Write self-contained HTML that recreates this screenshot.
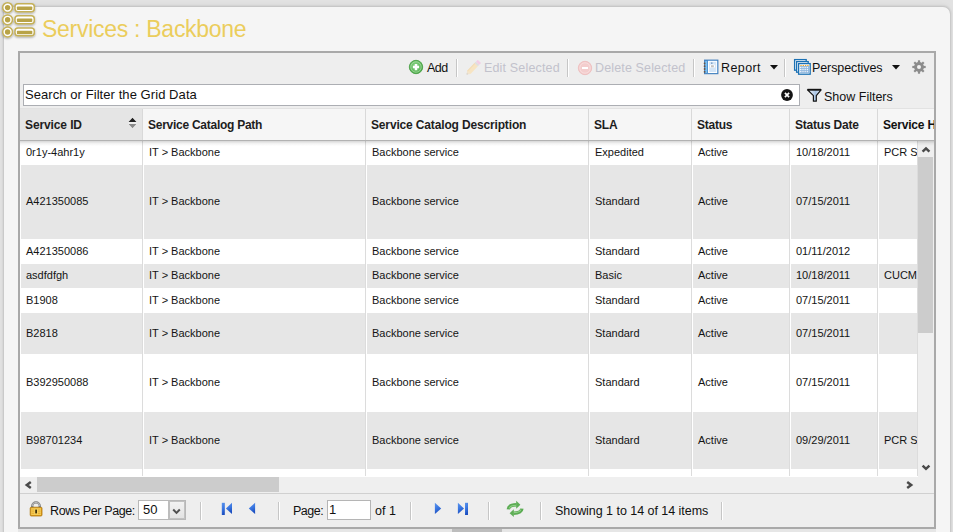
<!DOCTYPE html>
<html><head><meta charset="utf-8">
<style>
*{box-sizing:border-box;margin:0;padding:0}
html,body{width:953px;height:532px;overflow:hidden;background:#e2e2e2;font-family:"Liberation Sans",sans-serif;position:relative}
.abs{position:absolute}
.tx{position:absolute;white-space:nowrap}
.clip{position:absolute;overflow:hidden}
#panel{position:absolute;left:4px;top:7px;width:946px;height:540px;background:#f5f5f5;border-radius:7px 7px 0 0;box-shadow:0 0 2px 1px rgba(0,0,0,0.12),0 -2px 5px rgba(0,0,0,0.05)}
#grid{position:absolute;left:18px;top:51px;width:918px;height:478px;border:2px solid #a9a9a9;background:#eeeeee}
.sep{position:absolute;top:59px;width:1px;height:18px;background:#c6c6c6;box-shadow:1px 0 0 #ffffff}
#search{position:absolute;left:23px;top:84px;width:777px;height:22px;border:1px solid #acaeb3;background:#fff}
#hdrbg{position:absolute;left:20px;top:108px;width:914px;height:33px;border-top:1px solid #e2e2e2;border-bottom:1px solid #b2b2b2}
#hshadow{position:absolute;left:20px;top:141px;width:914px;height:5px;background:linear-gradient(rgba(0,0,0,0.16),rgba(0,0,0,0.05) 50%,rgba(0,0,0,0))}
.h{position:absolute;top:109px;height:31px}
.hl{position:absolute;top:109px;width:1px;height:31px;background:#d9d9d9;box-shadow:1px 0 0 #fafafa}
#bodybg{position:absolute;left:20px;top:141px;width:898px;height:336px;background:#fff}
.cb{position:absolute}
.vl{position:absolute;width:1px;background:#dcdcdc}
.ct{position:absolute;font-size:11px;line-height:14px;color:#141414;white-space:nowrap}
#vs{position:absolute;left:918px;top:141px;width:16px;height:336px;background:#efefef}
#hs{position:absolute;left:20px;top:477px;width:914px;height:17px;background:#efefef;border-bottom:1px solid #d0d0d0}
#pager{position:absolute;left:20px;top:494px;width:914px;height:33px;background:#eeeeee}
.psep{position:absolute;top:502px;width:1px;height:18px;background:#c6c6c6;box-shadow:1px 0 0 #ffffff}
</style></head><body>
<div id="panel"></div>
<svg class="abs" style="left:0;top:0" width="42" height="42" viewBox="0 0 42 42">
 <defs><filter id="ish" x="-10%" y="-10%" width="130%" height="130%"><feGaussianBlur in="SourceAlpha" stdDeviation="0.9"/><feOffset dx="0.4" dy="0.6"/><feComponentTransfer><feFuncA type="linear" slope="0.35"/></feComponentTransfer><feMerge><feMergeNode/><feMergeNode in="SourceGraphic"/></feMerge></filter></defs>
 <g filter="url(#ish)">
  <circle cx="7.6" cy="7.6" r="4.9" fill="#fff" stroke="#c4b059" stroke-width="1.5"/>
  <circle cx="7.6" cy="7.6" r="2.7" fill="#b8a347"/>
  <rect x="15" y="3.75" width="19.3" height="7.9" rx="3" fill="#fff" stroke="#c4b059" stroke-width="1.5"/>
  <rect x="16.9" y="6.5" width="15.4" height="3.5" rx="0.8" fill="#b8a347"/>
  <circle cx="7.6" cy="19.8" r="4.9" fill="#fff" stroke="#c4b059" stroke-width="1.5"/>
  <circle cx="7.6" cy="19.8" r="2.7" fill="#b8a347"/>
  <rect x="15" y="15.85" width="19.3" height="7.9" rx="3" fill="#fff" stroke="#c4b059" stroke-width="1.5"/>
  <rect x="16.9" y="18.6" width="15.4" height="3.5" rx="0.8" fill="#b8a347"/>
  <circle cx="7.6" cy="32.0" r="4.9" fill="#fff" stroke="#c4b059" stroke-width="1.5"/>
  <circle cx="7.6" cy="32.0" r="2.7" fill="#b8a347"/>
  <rect x="15" y="27.95" width="19.3" height="7.9" rx="3" fill="#fff" stroke="#c4b059" stroke-width="1.5"/>
  <rect x="16.9" y="30.7" width="15.4" height="3.5" rx="0.8" fill="#b8a347"/>
 </g>
</svg>
<div id="grid"></div>
<!-- toolbar -->
<svg class="abs" style="left:408px;top:59px" width="16" height="16" viewBox="0 0 16 16"><defs><radialGradient id="gg" cx="0.45" cy="0.4" r="0.6"><stop offset="0" stop-color="#8ad486"/><stop offset="1" stop-color="#4fae4b"/></radialGradient></defs><circle cx="8" cy="8" r="6.7" fill="url(#gg)" stroke="#4a9f45" stroke-width="0.9"/><circle cx="8" cy="8" r="5.2" fill="none" stroke="#d8f0d6" stroke-opacity="0.55" stroke-width="0.8"/><path d="M8 5v6.2M4.9 8.1h6.2" stroke="#fff" stroke-width="2.5"/></svg>
<div class="sep" style="left:456px"></div>
<svg class="abs" style="left:462px;top:56px" width="24" height="24" viewBox="0 0 24 24"><g transform="translate(4.6 18.6) rotate(-46)"><path d="M0 0L3.2 -2.3V2.3z" fill="#f1e3cc"/><path d="M0 0L1.3 -0.9V0.9z" fill="#c8c8c8"/><rect x="3.2" y="-2.3" width="10.6" height="4.6" fill="#f7e4c2"/><rect x="3.2" y="-2.3" width="10.6" height="1" fill="#f2dcb8"/><rect x="13.8" y="-2.3" width="2" height="4.6" fill="#dedede"/><rect x="15.8" y="-2.3" width="2.6" height="4.6" rx="0.6" fill="#f3cde6"/></g></svg>
<div class="sep" style="left:567px"></div>
<svg class="abs" style="left:577px;top:60px" width="16" height="16" viewBox="0 0 16 16"><circle cx="8" cy="8" r="6.7" fill="#f3cdcd" stroke="#edbdbd" stroke-width="0.9"/><circle cx="8" cy="8" r="5.2" fill="none" stroke="#fbe6e6" stroke-opacity="0.7" stroke-width="0.8"/><path d="M5 8h6" stroke="#fff" stroke-width="2"/></svg>
<div class="sep" style="left:693px"></div>
<svg class="abs" style="left:703px;top:59px" width="16" height="16" viewBox="0 0 16 16"><rect x="1.5" y="1" width="13.5" height="13.8" fill="#4d8fcf" stroke="#3a78b8" stroke-width="0.8"/><rect x="2.3" y="2" width="1.8" height="12" fill="#7cc0f0"/><rect x="5" y="1.8" width="9.2" height="12.2" fill="#ffffff"/><rect x="6.2" y="2.8" width="7" height="10.2" fill="#d3e5f7"/><rect x="7" y="5.6" width="5" height="3.2" rx="1" fill="#fff"/><path d="M8 6.8h2.8M8 7.8h2.8" stroke="#8a8a8a" stroke-width="0.6"/><rect x="8.2" y="3.6" width="1.2" height="1" fill="#2c5f9a"/><g fill="#6a5040"><circle cx="1.6" cy="4.3" r="0.9"/><circle cx="1.6" cy="7.2" r="0.9"/><circle cx="1.6" cy="10" r="0.9"/><circle cx="1.6" cy="12.8" r="0.9"/></g></svg>
<svg class="abs" style="left:770px;top:65px" width="8" height="5" viewBox="0 0 8 5"><path d="M0 0h8L4 4.6z" fill="#111"/></svg>
<div class="sep" style="left:784px"></div>
<svg class="abs" style="left:793px;top:58px" width="19" height="18" viewBox="0 0 19 18"><rect x="1.6" y="1.6" width="11.6" height="10.6" fill="#fff" stroke="#1c71b4" stroke-width="1.3"/><rect x="3.6" y="3.6" width="11.6" height="10.6" fill="#fff" stroke="#1c71b4" stroke-width="1.3"/><rect x="5.6" y="5.6" width="11.6" height="10.6" fill="#fff" stroke="#1c71b4" stroke-width="1.3"/><g fill="#f2a72a"><rect x="7.3" y="7" width="1.4" height="1.1"/><rect x="9.6" y="7" width="1.4" height="1.1"/><rect x="11.9" y="7" width="1.4" height="1.1"/><rect x="14.2" y="7" width="1.4" height="1.1"/></g><path d="M6.8 8.6h9.6M6.8 10.6h9.6M6.8 12.6h9.6M6.8 14.4h9.6M8.9 8.2v7M11.1 8.2v7M13.3 8.2v7M15.5 8.2v7" stroke="#8db6de" stroke-width="0.9"/></svg>
<svg class="abs" style="left:892px;top:65px" width="8" height="5" viewBox="0 0 8 5"><path d="M0 0h8L4 4.6z" fill="#111"/></svg>
<svg class="abs" style="left:912px;top:59.5px" width="14" height="14" viewBox="0 0 14 14"><g fill="#8c8c8c"><circle cx="7" cy="7" r="4.9"/><rect x="5.9" y="0.3" width="2.2" height="13.4"/><rect x="0.3" y="5.9" width="13.4" height="2.2"/><rect x="5.9" y="0.3" width="2.2" height="13.4" transform="rotate(45 7 7)"/><rect x="5.9" y="0.3" width="2.2" height="13.4" transform="rotate(-45 7 7)"/></g><circle cx="7" cy="7" r="2" fill="#f2f2f2"/></svg>
<!-- search -->
<div id="search"></div>
<svg class="abs" style="left:781px;top:89px" width="12" height="12" viewBox="0 0 12 12"><circle cx="6" cy="6" r="5.9" fill="#151515"/><path d="M3.9 3.9l4.2 4.2M8.1 3.9l-4.2 4.2" stroke="#fff" stroke-width="1.7"/></svg>
<svg class="abs" style="left:806px;top:88px" width="17" height="15" viewBox="0 0 17 15"><defs><linearGradient id="fg" x1="0" y1="0" x2="1" y2="0"><stop offset="0" stop-color="#ffffff"/><stop offset="0.6" stop-color="#a9c4e4"/><stop offset="1" stop-color="#e8f0fa"/></linearGradient></defs><path d="M1.5 1.8h13.6L10.3 7.6v5.6H7.4V7.6z" fill="url(#fg)" stroke="#141414" stroke-width="1.2" stroke-linejoin="round"/><path d="M1.5 1.6h13.6" stroke="#141414" stroke-width="1.6"/></svg>
<!-- header -->
<div id="hdrbg"></div>
<div class="h" style="left:20px;width:122px;background:#e5e5e5"></div>
<div class="hl" style="left:142px"></div>
<div class="h" style="left:143px;width:222px;background:#f6f6f6"></div>
<div class="hl" style="left:365px"></div>
<div class="h" style="left:366px;width:222px;background:#f6f6f6"></div>
<div class="hl" style="left:588px"></div>
<div class="h" style="left:589px;width:102px;background:#f6f6f6"></div>
<div class="hl" style="left:691px"></div>
<div class="h" style="left:692px;width:97px;background:#f6f6f6"></div>
<div class="hl" style="left:789px"></div>
<div class="h" style="left:790px;width:87px;background:#f6f6f6"></div>
<div class="hl" style="left:877px"></div>
<div class="h" style="left:878px;width:56px;background:#f6f6f6"></div>
<svg class="abs" style="left:126px;top:116px" width="13" height="14" viewBox="0 0 13 14"><path d="M2.5 6L6.5 1.8 10.5 6z" fill="#222" stroke="#fff" stroke-width="0.8" paint-order="stroke"/><path d="M2.5 8L6.5 12.2 10.5 8z" fill="#8a8a8a" stroke="#fff" stroke-width="0.8" paint-order="stroke"/></svg>
<!-- body -->
<div id="bodybg"></div>
<div class="cb" style="left:21px;top:141px;width:121px;height:24px;background:#fff"></div>
<div class="clip" style="left:20px;top:141px;width:122px;height:24px"><span class="ct" style="left:6px;top:4px">0r1y-4ahr1y</span></div>
<div class="cb" style="left:144px;top:141px;width:221px;height:24px;background:#fff"></div>
<div class="clip" style="left:143px;top:141px;width:222px;height:24px"><span class="ct" style="left:6px;top:4px">IT &gt; Backbone</span></div>
<div class="cb" style="left:367px;top:141px;width:221px;height:24px;background:#fff"></div>
<div class="clip" style="left:366px;top:141px;width:222px;height:24px"><span class="ct" style="left:6px;top:4px">Backbone service</span></div>
<div class="cb" style="left:590px;top:141px;width:101px;height:24px;background:#fff"></div>
<div class="clip" style="left:589px;top:141px;width:102px;height:24px"><span class="ct" style="left:6px;top:4px">Expedited</span></div>
<div class="cb" style="left:693px;top:141px;width:96px;height:24px;background:#fff"></div>
<div class="clip" style="left:692px;top:141px;width:97px;height:24px"><span class="ct" style="left:6px;top:4px">Active</span></div>
<div class="cb" style="left:791px;top:141px;width:86px;height:24px;background:#fff"></div>
<div class="clip" style="left:790px;top:141px;width:87px;height:24px"><span class="ct" style="left:6px;top:4px">10/18/2011</span></div>
<div class="cb" style="left:879px;top:141px;width:38px;height:24px;background:#fff"></div>
<div class="clip" style="left:878px;top:141px;width:39px;height:24px"><span class="ct" style="left:6px;top:4px">PCR Switch</span></div>
<div class="cb" style="left:21px;top:165px;width:121px;height:74px;background:#e6e6e6"></div>
<div class="clip" style="left:20px;top:165px;width:122px;height:74px"><span class="ct" style="left:6px;top:29px">A421350085</span></div>
<div class="cb" style="left:144px;top:165px;width:221px;height:74px;background:#e6e6e6"></div>
<div class="clip" style="left:143px;top:165px;width:222px;height:74px"><span class="ct" style="left:6px;top:29px">IT &gt; Backbone</span></div>
<div class="cb" style="left:367px;top:165px;width:221px;height:74px;background:#e6e6e6"></div>
<div class="clip" style="left:366px;top:165px;width:222px;height:74px"><span class="ct" style="left:6px;top:29px">Backbone service</span></div>
<div class="cb" style="left:590px;top:165px;width:101px;height:74px;background:#e6e6e6"></div>
<div class="clip" style="left:589px;top:165px;width:102px;height:74px"><span class="ct" style="left:6px;top:29px">Standard</span></div>
<div class="cb" style="left:693px;top:165px;width:96px;height:74px;background:#e6e6e6"></div>
<div class="clip" style="left:692px;top:165px;width:97px;height:74px"><span class="ct" style="left:6px;top:29px">Active</span></div>
<div class="cb" style="left:791px;top:165px;width:86px;height:74px;background:#e6e6e6"></div>
<div class="clip" style="left:790px;top:165px;width:87px;height:74px"><span class="ct" style="left:6px;top:29px">07/15/2011</span></div>
<div class="cb" style="left:879px;top:165px;width:38px;height:74px;background:#e6e6e6"></div>
<div class="cb" style="left:21px;top:239px;width:121px;height:25px;background:#fff"></div>
<div class="clip" style="left:20px;top:239px;width:122px;height:25px"><span class="ct" style="left:6px;top:5px">A421350086</span></div>
<div class="cb" style="left:144px;top:239px;width:221px;height:25px;background:#fff"></div>
<div class="clip" style="left:143px;top:239px;width:222px;height:25px"><span class="ct" style="left:6px;top:5px">IT &gt; Backbone</span></div>
<div class="cb" style="left:367px;top:239px;width:221px;height:25px;background:#fff"></div>
<div class="clip" style="left:366px;top:239px;width:222px;height:25px"><span class="ct" style="left:6px;top:5px">Backbone service</span></div>
<div class="cb" style="left:590px;top:239px;width:101px;height:25px;background:#fff"></div>
<div class="clip" style="left:589px;top:239px;width:102px;height:25px"><span class="ct" style="left:6px;top:5px">Standard</span></div>
<div class="cb" style="left:693px;top:239px;width:96px;height:25px;background:#fff"></div>
<div class="clip" style="left:692px;top:239px;width:97px;height:25px"><span class="ct" style="left:6px;top:5px">Active</span></div>
<div class="cb" style="left:791px;top:239px;width:86px;height:25px;background:#fff"></div>
<div class="clip" style="left:790px;top:239px;width:87px;height:25px"><span class="ct" style="left:6px;top:5px">01/11/2012</span></div>
<div class="cb" style="left:879px;top:239px;width:38px;height:25px;background:#fff"></div>
<div class="cb" style="left:21px;top:264px;width:121px;height:24px;background:#e6e6e6"></div>
<div class="clip" style="left:20px;top:264px;width:122px;height:24px"><span class="ct" style="left:6px;top:4px">asdfdfgh</span></div>
<div class="cb" style="left:144px;top:264px;width:221px;height:24px;background:#e6e6e6"></div>
<div class="clip" style="left:143px;top:264px;width:222px;height:24px"><span class="ct" style="left:6px;top:4px">IT &gt; Backbone</span></div>
<div class="cb" style="left:367px;top:264px;width:221px;height:24px;background:#e6e6e6"></div>
<div class="clip" style="left:366px;top:264px;width:222px;height:24px"><span class="ct" style="left:6px;top:4px">Backbone service</span></div>
<div class="cb" style="left:590px;top:264px;width:101px;height:24px;background:#e6e6e6"></div>
<div class="clip" style="left:589px;top:264px;width:102px;height:24px"><span class="ct" style="left:6px;top:4px">Basic</span></div>
<div class="cb" style="left:693px;top:264px;width:96px;height:24px;background:#e6e6e6"></div>
<div class="clip" style="left:692px;top:264px;width:97px;height:24px"><span class="ct" style="left:6px;top:4px">Active</span></div>
<div class="cb" style="left:791px;top:264px;width:86px;height:24px;background:#e6e6e6"></div>
<div class="clip" style="left:790px;top:264px;width:87px;height:24px"><span class="ct" style="left:6px;top:4px">10/18/2011</span></div>
<div class="cb" style="left:879px;top:264px;width:38px;height:24px;background:#e6e6e6"></div>
<div class="clip" style="left:878px;top:264px;width:39px;height:24px"><span class="ct" style="left:6px;top:4px">CUCM Switch</span></div>
<div class="cb" style="left:21px;top:288px;width:121px;height:25px;background:#fff"></div>
<div class="clip" style="left:20px;top:288px;width:122px;height:25px"><span class="ct" style="left:6px;top:5px">B1908</span></div>
<div class="cb" style="left:144px;top:288px;width:221px;height:25px;background:#fff"></div>
<div class="clip" style="left:143px;top:288px;width:222px;height:25px"><span class="ct" style="left:6px;top:5px">IT &gt; Backbone</span></div>
<div class="cb" style="left:367px;top:288px;width:221px;height:25px;background:#fff"></div>
<div class="clip" style="left:366px;top:288px;width:222px;height:25px"><span class="ct" style="left:6px;top:5px">Backbone service</span></div>
<div class="cb" style="left:590px;top:288px;width:101px;height:25px;background:#fff"></div>
<div class="clip" style="left:589px;top:288px;width:102px;height:25px"><span class="ct" style="left:6px;top:5px">Standard</span></div>
<div class="cb" style="left:693px;top:288px;width:96px;height:25px;background:#fff"></div>
<div class="clip" style="left:692px;top:288px;width:97px;height:25px"><span class="ct" style="left:6px;top:5px">Active</span></div>
<div class="cb" style="left:791px;top:288px;width:86px;height:25px;background:#fff"></div>
<div class="clip" style="left:790px;top:288px;width:87px;height:25px"><span class="ct" style="left:6px;top:5px">07/15/2011</span></div>
<div class="cb" style="left:879px;top:288px;width:38px;height:25px;background:#fff"></div>
<div class="cb" style="left:21px;top:313px;width:121px;height:41px;background:#e6e6e6"></div>
<div class="clip" style="left:20px;top:313px;width:122px;height:41px"><span class="ct" style="left:6px;top:13px">B2818</span></div>
<div class="cb" style="left:144px;top:313px;width:221px;height:41px;background:#e6e6e6"></div>
<div class="clip" style="left:143px;top:313px;width:222px;height:41px"><span class="ct" style="left:6px;top:13px">IT &gt; Backbone</span></div>
<div class="cb" style="left:367px;top:313px;width:221px;height:41px;background:#e6e6e6"></div>
<div class="clip" style="left:366px;top:313px;width:222px;height:41px"><span class="ct" style="left:6px;top:13px">Backbone service</span></div>
<div class="cb" style="left:590px;top:313px;width:101px;height:41px;background:#e6e6e6"></div>
<div class="clip" style="left:589px;top:313px;width:102px;height:41px"><span class="ct" style="left:6px;top:13px">Standard</span></div>
<div class="cb" style="left:693px;top:313px;width:96px;height:41px;background:#e6e6e6"></div>
<div class="clip" style="left:692px;top:313px;width:97px;height:41px"><span class="ct" style="left:6px;top:13px">Active</span></div>
<div class="cb" style="left:791px;top:313px;width:86px;height:41px;background:#e6e6e6"></div>
<div class="clip" style="left:790px;top:313px;width:87px;height:41px"><span class="ct" style="left:6px;top:13px">07/15/2011</span></div>
<div class="cb" style="left:879px;top:313px;width:38px;height:41px;background:#e6e6e6"></div>
<div class="cb" style="left:21px;top:354px;width:121px;height:58px;background:#fff"></div>
<div class="clip" style="left:20px;top:354px;width:122px;height:58px"><span class="ct" style="left:6px;top:21px">B392950088</span></div>
<div class="cb" style="left:144px;top:354px;width:221px;height:58px;background:#fff"></div>
<div class="clip" style="left:143px;top:354px;width:222px;height:58px"><span class="ct" style="left:6px;top:21px">IT &gt; Backbone</span></div>
<div class="cb" style="left:367px;top:354px;width:221px;height:58px;background:#fff"></div>
<div class="clip" style="left:366px;top:354px;width:222px;height:58px"><span class="ct" style="left:6px;top:21px">Backbone service</span></div>
<div class="cb" style="left:590px;top:354px;width:101px;height:58px;background:#fff"></div>
<div class="clip" style="left:589px;top:354px;width:102px;height:58px"><span class="ct" style="left:6px;top:21px">Standard</span></div>
<div class="cb" style="left:693px;top:354px;width:96px;height:58px;background:#fff"></div>
<div class="clip" style="left:692px;top:354px;width:97px;height:58px"><span class="ct" style="left:6px;top:21px">Active</span></div>
<div class="cb" style="left:791px;top:354px;width:86px;height:58px;background:#fff"></div>
<div class="clip" style="left:790px;top:354px;width:87px;height:58px"><span class="ct" style="left:6px;top:21px">07/15/2011</span></div>
<div class="cb" style="left:879px;top:354px;width:38px;height:58px;background:#fff"></div>
<div class="cb" style="left:21px;top:412px;width:121px;height:57px;background:#e6e6e6"></div>
<div class="clip" style="left:20px;top:412px;width:122px;height:57px"><span class="ct" style="left:6px;top:21px">B98701234</span></div>
<div class="cb" style="left:144px;top:412px;width:221px;height:57px;background:#e6e6e6"></div>
<div class="clip" style="left:143px;top:412px;width:222px;height:57px"><span class="ct" style="left:6px;top:21px">IT &gt; Backbone</span></div>
<div class="cb" style="left:367px;top:412px;width:221px;height:57px;background:#e6e6e6"></div>
<div class="clip" style="left:366px;top:412px;width:222px;height:57px"><span class="ct" style="left:6px;top:21px">Backbone service</span></div>
<div class="cb" style="left:590px;top:412px;width:101px;height:57px;background:#e6e6e6"></div>
<div class="clip" style="left:589px;top:412px;width:102px;height:57px"><span class="ct" style="left:6px;top:21px">Standard</span></div>
<div class="cb" style="left:693px;top:412px;width:96px;height:57px;background:#e6e6e6"></div>
<div class="clip" style="left:692px;top:412px;width:97px;height:57px"><span class="ct" style="left:6px;top:21px">Active</span></div>
<div class="cb" style="left:791px;top:412px;width:86px;height:57px;background:#e6e6e6"></div>
<div class="clip" style="left:790px;top:412px;width:87px;height:57px"><span class="ct" style="left:6px;top:21px">09/29/2011</span></div>
<div class="cb" style="left:879px;top:412px;width:38px;height:57px;background:#e6e6e6"></div>
<div class="clip" style="left:878px;top:412px;width:39px;height:57px"><span class="ct" style="left:6px;top:21px">PCR Switch</span></div>
<div class="cb" style="left:21px;top:469px;width:121px;height:8px;background:#fff"></div>
<div class="cb" style="left:144px;top:469px;width:221px;height:8px;background:#fff"></div>
<div class="cb" style="left:367px;top:469px;width:221px;height:8px;background:#fff"></div>
<div class="cb" style="left:590px;top:469px;width:101px;height:8px;background:#fff"></div>
<div class="cb" style="left:693px;top:469px;width:96px;height:8px;background:#fff"></div>
<div class="cb" style="left:791px;top:469px;width:86px;height:8px;background:#fff"></div>
<div class="cb" style="left:879px;top:469px;width:38px;height:8px;background:#fff"></div>
<div class="vl" style="left:142px;top:141px;height:335px"></div>
<div class="vl" style="left:365px;top:141px;height:335px"></div>
<div class="vl" style="left:588px;top:141px;height:335px"></div>
<div class="vl" style="left:691px;top:141px;height:335px"></div>
<div class="vl" style="left:789px;top:141px;height:335px"></div>
<div class="vl" style="left:877px;top:141px;height:335px"></div>
<div class="vl" style="left:917px;top:141px;height:335px"></div>
<div id="vs">
  <svg class="abs" style="left:3px;top:4px" width="10" height="9" viewBox="0 0 10 9"><path d="M1.6 6.6L5 3.4 8.4 6.6" fill="none" stroke="#4a4a4a" stroke-width="2.5"/></svg>
  <div class="abs" style="left:0;top:16px;width:15px;height:176px;background:#cccccc"></div>
  <svg class="abs" style="left:3px;top:322px" width="10" height="9" viewBox="0 0 10 9"><path d="M1.6 2.6L5 5.8 8.4 2.6" fill="none" stroke="#4a4a4a" stroke-width="2.5"/></svg>
</div>
<div id="hs">
  <svg class="abs" style="left:4px;top:3px" width="9" height="10" viewBox="0 0 9 10"><path d="M6.8 1.9L2.8 4.9 6.8 7.9" fill="none" stroke="#4a4a4a" stroke-width="2.5"/></svg>
  <div class="abs" style="left:17px;top:0;width:242px;height:15px;background:#cccccc"></div>
  <svg class="abs" style="left:885px;top:3px" width="9" height="10" viewBox="0 0 9 10"><path d="M2.2 1.9L6.2 4.9 2.2 7.9" fill="none" stroke="#4a4a4a" stroke-width="2.5"/></svg>
</div>
<div id="hshadow"></div>
<!-- pager -->
<div id="pager"></div>
<svg class="abs" style="left:29px;top:500px" width="14" height="17" viewBox="0 0 14 17"><path d="M3.2 7.5V6.2a3.8 3.8 0 0 1 7.6 0V7.5" fill="none" stroke="#7d7d7d" stroke-width="2.2"/><path d="M3.2 7.5V6.2a3.8 3.8 0 0 1 7.6 0V7.5" fill="none" stroke="#d8d8d8" stroke-width="0.7"/><path d="M2.1 6.8h2.2M9.7 6.8h2.2" stroke="#5a78a8" stroke-width="1"/><rect x="1.2" y="7.2" width="11.8" height="8.8" rx="1" fill="#dd9a18" stroke="#b07812" stroke-width="0.8"/><rect x="2.2" y="8.2" width="9.8" height="6.8" fill="#f6cf5a"/><path d="M2.6 10h2.6M2.6 11.8h2.6M2.6 13.6h2.6M9 10h2.6M9 11.8h2.6M9 13.6h2.6" stroke="#e2a52a" stroke-width="0.8"/><rect x="6.3" y="9.6" width="1.6" height="3.8" fill="#2c1e00"/></svg>
<div class="abs" style="left:138px;top:500px;width:48px;height:20px;border:1px solid #b8b8b8;background:#fff"><div class="abs" style="left:29px;top:0;width:17px;height:18px;background:linear-gradient(#f2f2f2,#e3e3e3);border:1px solid #c2c2c2;border-left:2px solid #bdbdbd"></div></div><svg class="abs" style="left:172px;top:507.5px" width="9" height="8" viewBox="0 0 9 8"><path d="M1.2 1.5l3.3 3.4 3.3-3.4" fill="none" stroke="#505050" stroke-width="2"/></svg>
<div class="psep" style="left:200px"></div>
<svg class="abs" style="left:221px;top:502px" width="12" height="14" viewBox="0 0 12 14"><defs><linearGradient id="nb1" x1="0" y1="0" x2="0.3" y2="1"><stop offset="0" stop-color="#5b95ee"/><stop offset="0.55" stop-color="#3a76e0"/><stop offset="1" stop-color="#1c4fc0"/></linearGradient></defs><rect x="0.8" y="0.8" width="3" height="12.2" fill="url(#nb1)"/><path d="M11 0.8V11.9L4.9 6.4z" fill="url(#nb1)"/></svg>
<svg class="abs" style="left:248px;top:502px" width="8" height="14" viewBox="0 0 8 14"><defs><linearGradient id="nb2" x1="0" y1="0" x2="0.3" y2="1"><stop offset="0" stop-color="#5b95ee"/><stop offset="0.55" stop-color="#3a76e0"/><stop offset="1" stop-color="#1c4fc0"/></linearGradient></defs><path d="M7.1 0.8V11.9L0.8 6.4z" fill="url(#nb2)"/></svg>
<div class="psep" style="left:278px"></div>
<div class="abs" style="left:327px;top:500px;width:44px;height:20px;border:1px solid #b5b5b5;background:#fff"></div>
<div class="psep" style="left:410px"></div>
<svg class="abs" style="left:434px;top:502px" width="8" height="14" viewBox="0 0 8 14"><defs><linearGradient id="nb3" x1="0" y1="0" x2="0.3" y2="1"><stop offset="0" stop-color="#5b95ee"/><stop offset="0.55" stop-color="#3a76e0"/><stop offset="1" stop-color="#1c4fc0"/></linearGradient></defs><path d="M0.9 0.8V11.9L7.2 6.4z" fill="url(#nb3)"/></svg>
<svg class="abs" style="left:457px;top:502px" width="12" height="14" viewBox="0 0 12 14"><defs><linearGradient id="nb4" x1="0" y1="0" x2="0.3" y2="1"><stop offset="0" stop-color="#5b95ee"/><stop offset="0.55" stop-color="#3a76e0"/><stop offset="1" stop-color="#1c4fc0"/></linearGradient></defs><path d="M0.9 0.8V11.9L7 6.4z" fill="url(#nb4)"/><rect x="8" y="0.8" width="3" height="12.2" fill="url(#nb4)"/></svg>
<div class="psep" style="left:488px"></div>
<svg class="abs" style="left:503px;top:498px" width="24" height="22" viewBox="0 0 24 22"><g fill="none" stroke-linecap="butt"><path d="M5.3 11.3C5.6 8.2 8.6 6.7 13.6 6.7" stroke="#5aab52" stroke-width="3.4"/><path d="M6.2 10.4C6.8 8.4 9 7.3 13.6 7.3" stroke="#8fd087" stroke-width="1.1"/><path d="M18.9 10.7C18.6 13.8 15.6 15.3 10.4 15.3" stroke="#5aab52" stroke-width="3.4"/><path d="M17.8 11.6C17.2 13.6 15 14.6 10.4 14.6" stroke="#8fd087" stroke-width="1.1"/></g><path d="M13.2 2.8L17.4 6.8L13.2 10.7z" fill="#5fae57"/><path d="M10.8 11.3L6.6 15.2L10.8 19z" fill="#5fae57"/></svg>
<div class="psep" style="left:540px"></div>
<div class="psep" style="left:721px"></div>
<span class="tx" style="left:42px;top:18px;font-size:23px;line-height:23px;letter-spacing:-0.278px;font-weight:normal;color:#ebcd5c;">Services : Backbone</span>
<span class="tx" style="left:427px;top:62px;font-size:12.5px;line-height:12.5px;letter-spacing:-0.500px;font-weight:normal;color:#111;">Add</span>
<span class="tx" style="left:484px;top:62px;font-size:12.5px;line-height:12.5px;letter-spacing:0.167px;font-weight:normal;color:#c2c2cc;">Edit Selected</span>
<span class="tx" style="left:595px;top:62px;font-size:12.5px;line-height:12.5px;letter-spacing:0.143px;font-weight:normal;color:#c2c2cc;">Delete Selected</span>
<span class="tx" style="left:721px;top:62px;font-size:12.5px;line-height:12.5px;letter-spacing:0.400px;font-weight:normal;color:#111;">Report</span>
<span class="tx" style="left:812px;top:62px;font-size:12.5px;line-height:12.5px;letter-spacing:-0.091px;font-weight:normal;color:#111;">Perspectives</span>
<span class="tx" style="left:824px;top:91px;font-size:12.5px;line-height:12.5px;letter-spacing:0.000px;font-weight:normal;color:#111;">Show Filters</span>
<span class="tx" style="left:25px;top:88px;font-size:13px;line-height:13px;letter-spacing:0.069px;font-weight:normal;color:#111;">Search or Filter the Grid Data</span>
<span class="tx" style="left:50px;top:505px;font-size:12.5px;line-height:12.5px;letter-spacing:-0.385px;font-weight:normal;color:#111;">Rows Per Page:</span>
<span class="tx" style="left:293px;top:505px;font-size:12.5px;line-height:12.5px;letter-spacing:-0.500px;font-weight:normal;color:#111;">Page:</span>
<span class="tx" style="left:375px;top:505px;font-size:12.5px;line-height:12.5px;letter-spacing:0.000px;font-weight:normal;color:#111;">of 1</span>
<span class="tx" style="left:555px;top:505px;font-size:12.5px;line-height:12.5px;letter-spacing:-0.038px;font-weight:normal;color:#111;">Showing 1 to 14 of 14 items</span>
<span class="tx" style="left:143px;top:503px;font-size:13px;line-height:13px;letter-spacing:0.000px;font-weight:normal;color:#111;">50</span>
<span class="tx" style="left:329px;top:503px;font-size:13px;line-height:13px;letter-spacing:0.000px;font-weight:normal;color:#111;">1</span>
<span class="tx" style="left:25px;top:119px;font-size:12px;line-height:12px;letter-spacing:-0.111px;font-weight:bold;color:#1e1e1e;">Service ID</span>
<span class="tx" style="left:148px;top:119px;font-size:12px;line-height:12px;letter-spacing:-0.264px;font-weight:bold;color:#1e1e1e;">Service Catalog Path</span>
<span class="tx" style="left:371px;top:119px;font-size:12px;line-height:12px;letter-spacing:-0.154px;font-weight:bold;color:#1e1e1e;">Service Catalog Description</span>
<span class="tx" style="left:594px;top:119px;font-size:12px;line-height:12px;letter-spacing:-0.200px;font-weight:bold;color:#1e1e1e;">SLA</span>
<span class="tx" style="left:697px;top:119px;font-size:12px;line-height:12px;letter-spacing:-0.250px;font-weight:bold;color:#1e1e1e;">Status</span>
<span class="tx" style="left:795px;top:119px;font-size:12px;line-height:12px;letter-spacing:-0.200px;font-weight:bold;color:#1e1e1e;">Status Date</span>
<div class="clip" style="left:878px;top:109px;width:56px;height:31px"><span class="tx" style="left:5px;top:10px;font-size:12px;line-height:12px;letter-spacing:-0.200px;font-weight:bold;color:#111">Service Host</span></div>
<div class="abs" style="left:18px;top:529px;width:918px;height:3px;background:#e6e6e6"></div>
<div class="abs" style="left:452px;top:529px;width:50px;height:3px;background:#bdbdbd"></div>
</body></html>
